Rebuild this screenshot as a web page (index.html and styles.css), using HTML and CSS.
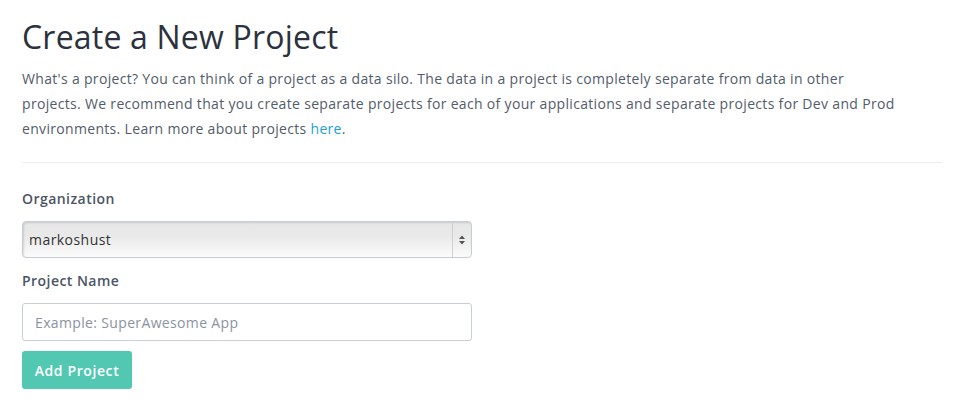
FILE: index.html
```html
<!DOCTYPE html>
<html>
<head>
<meta charset="utf-8">
<link rel="stylesheet" href="styles.css">
</head>
<body>
<main class="page">
  <h1 class="title">Create a New Project</h1>
  <p class="intro">What's a project? You can think of a project as a data silo. The data in a project is completely separate from data in other<br>projects. We recommend that you create separate projects for each of your applications and separate projects for Dev and Prod<br>environments. Learn more about projects <a href="#" class="link">here</a>.</p>
  <hr class="divider">
  <form class="form">
    <label class="label">Organization</label>
    <div class="select">
      <span class="select-value">markoshust</span>
      <span class="select-arrows">
        <svg width="8" height="12" viewBox="0 0 8 12"><path d="M4 1.5 L7 5 L1 5 Z" fill="#555"/><path d="M4 10.5 L7 7 L1 7 Z" fill="#555"/></svg>
      </span>
    </div>
    <label class="label label-second">Project Name</label>
    <input class="input" type="text" placeholder="Example: SuperAwesome App">
    <button class="button" type="button">Add Project</button>
  </form>
</main>
</body>
</html>
```
FILE: styles.css
```css
html, body {
  margin: 0;
  padding: 0;
  background: #ffffff;
}
body {
  font-family: "Open Sans", "Noto Sans", sans-serif;
  color: #545e6d;
}
.page {
  padding: 17px 22px 0 22px;
}
.title {
  margin: 0;
  font-family: "Open Sans", sans-serif;
  font-weight: 400;
  font-size: 32px;
  line-height: 40px;
  color: #2c323d;
  letter-spacing: 0.2px;
}
.intro {
  margin: 9px 0 0 0;
  font-size: 14px;
  line-height: 25px;
  letter-spacing: 0.32px;
  color: #525c6b;
  white-space: nowrap;
}
.link {
  color: #1c9fd3;
  text-decoration: none;
}
.divider {
  border: 0;
  border-top: 1px solid #eceef0;
  margin: 21px 0 0 0;
  width: 920px;
}
.form {
  display: flex;
  flex-direction: column;
  align-items: flex-start;
  padding-top: 26px;
}
.label {
  font-size: 14px;
  font-weight: 600;
  line-height: 20px;
  letter-spacing: 0.45px;
  color: #4b5565;
}
.label-second {
  margin-top: 13px;
}
.select {
  margin-top: 12px;
  box-sizing: border-box;
  width: 450px;
  height: 37px;
  border: 1px solid #c6ccd4;
  border-radius: 4px;
  background: linear-gradient(#e6e6e6, #e9e9e9 40%, #fbfbfb);
  box-shadow: inset 1px 1px 2px rgba(0,0,0,0.12);
  display: flex;
  align-items: center;
}
.select-value {
  flex: 1;
  padding-left: 6px;
  font-size: 14px;
  letter-spacing: 0.45px;
  color: #333;
}
.select-arrows {
  width: 18px;
  height: 100%;
  border-left: 1px solid #cfcfcf;
  display: flex;
  align-items: center;
  justify-content: center;
}
.input {
  margin-top: 12px;
  box-sizing: border-box;
  width: 450px;
  height: 38px;
  border: 1px solid #c8ced6;
  border-radius: 3px;
  padding: 0 12px;
  font-family: "Open Sans", sans-serif;
  font-size: 14px;
  letter-spacing: 0.35px;
  outline: none;
}
.input::placeholder {
  color: #8a93a0;
}
.button {
  margin-top: 10px;
  height: 38px;
  width: 110px;
  padding: 0;
  border: 0;
  border-radius: 3px;
  background: #52c7b1;
  color: #ffffff;
  font-family: "Open Sans", sans-serif;
  font-weight: 600;
  font-size: 14px;
  letter-spacing: 0.6px;
}
```
